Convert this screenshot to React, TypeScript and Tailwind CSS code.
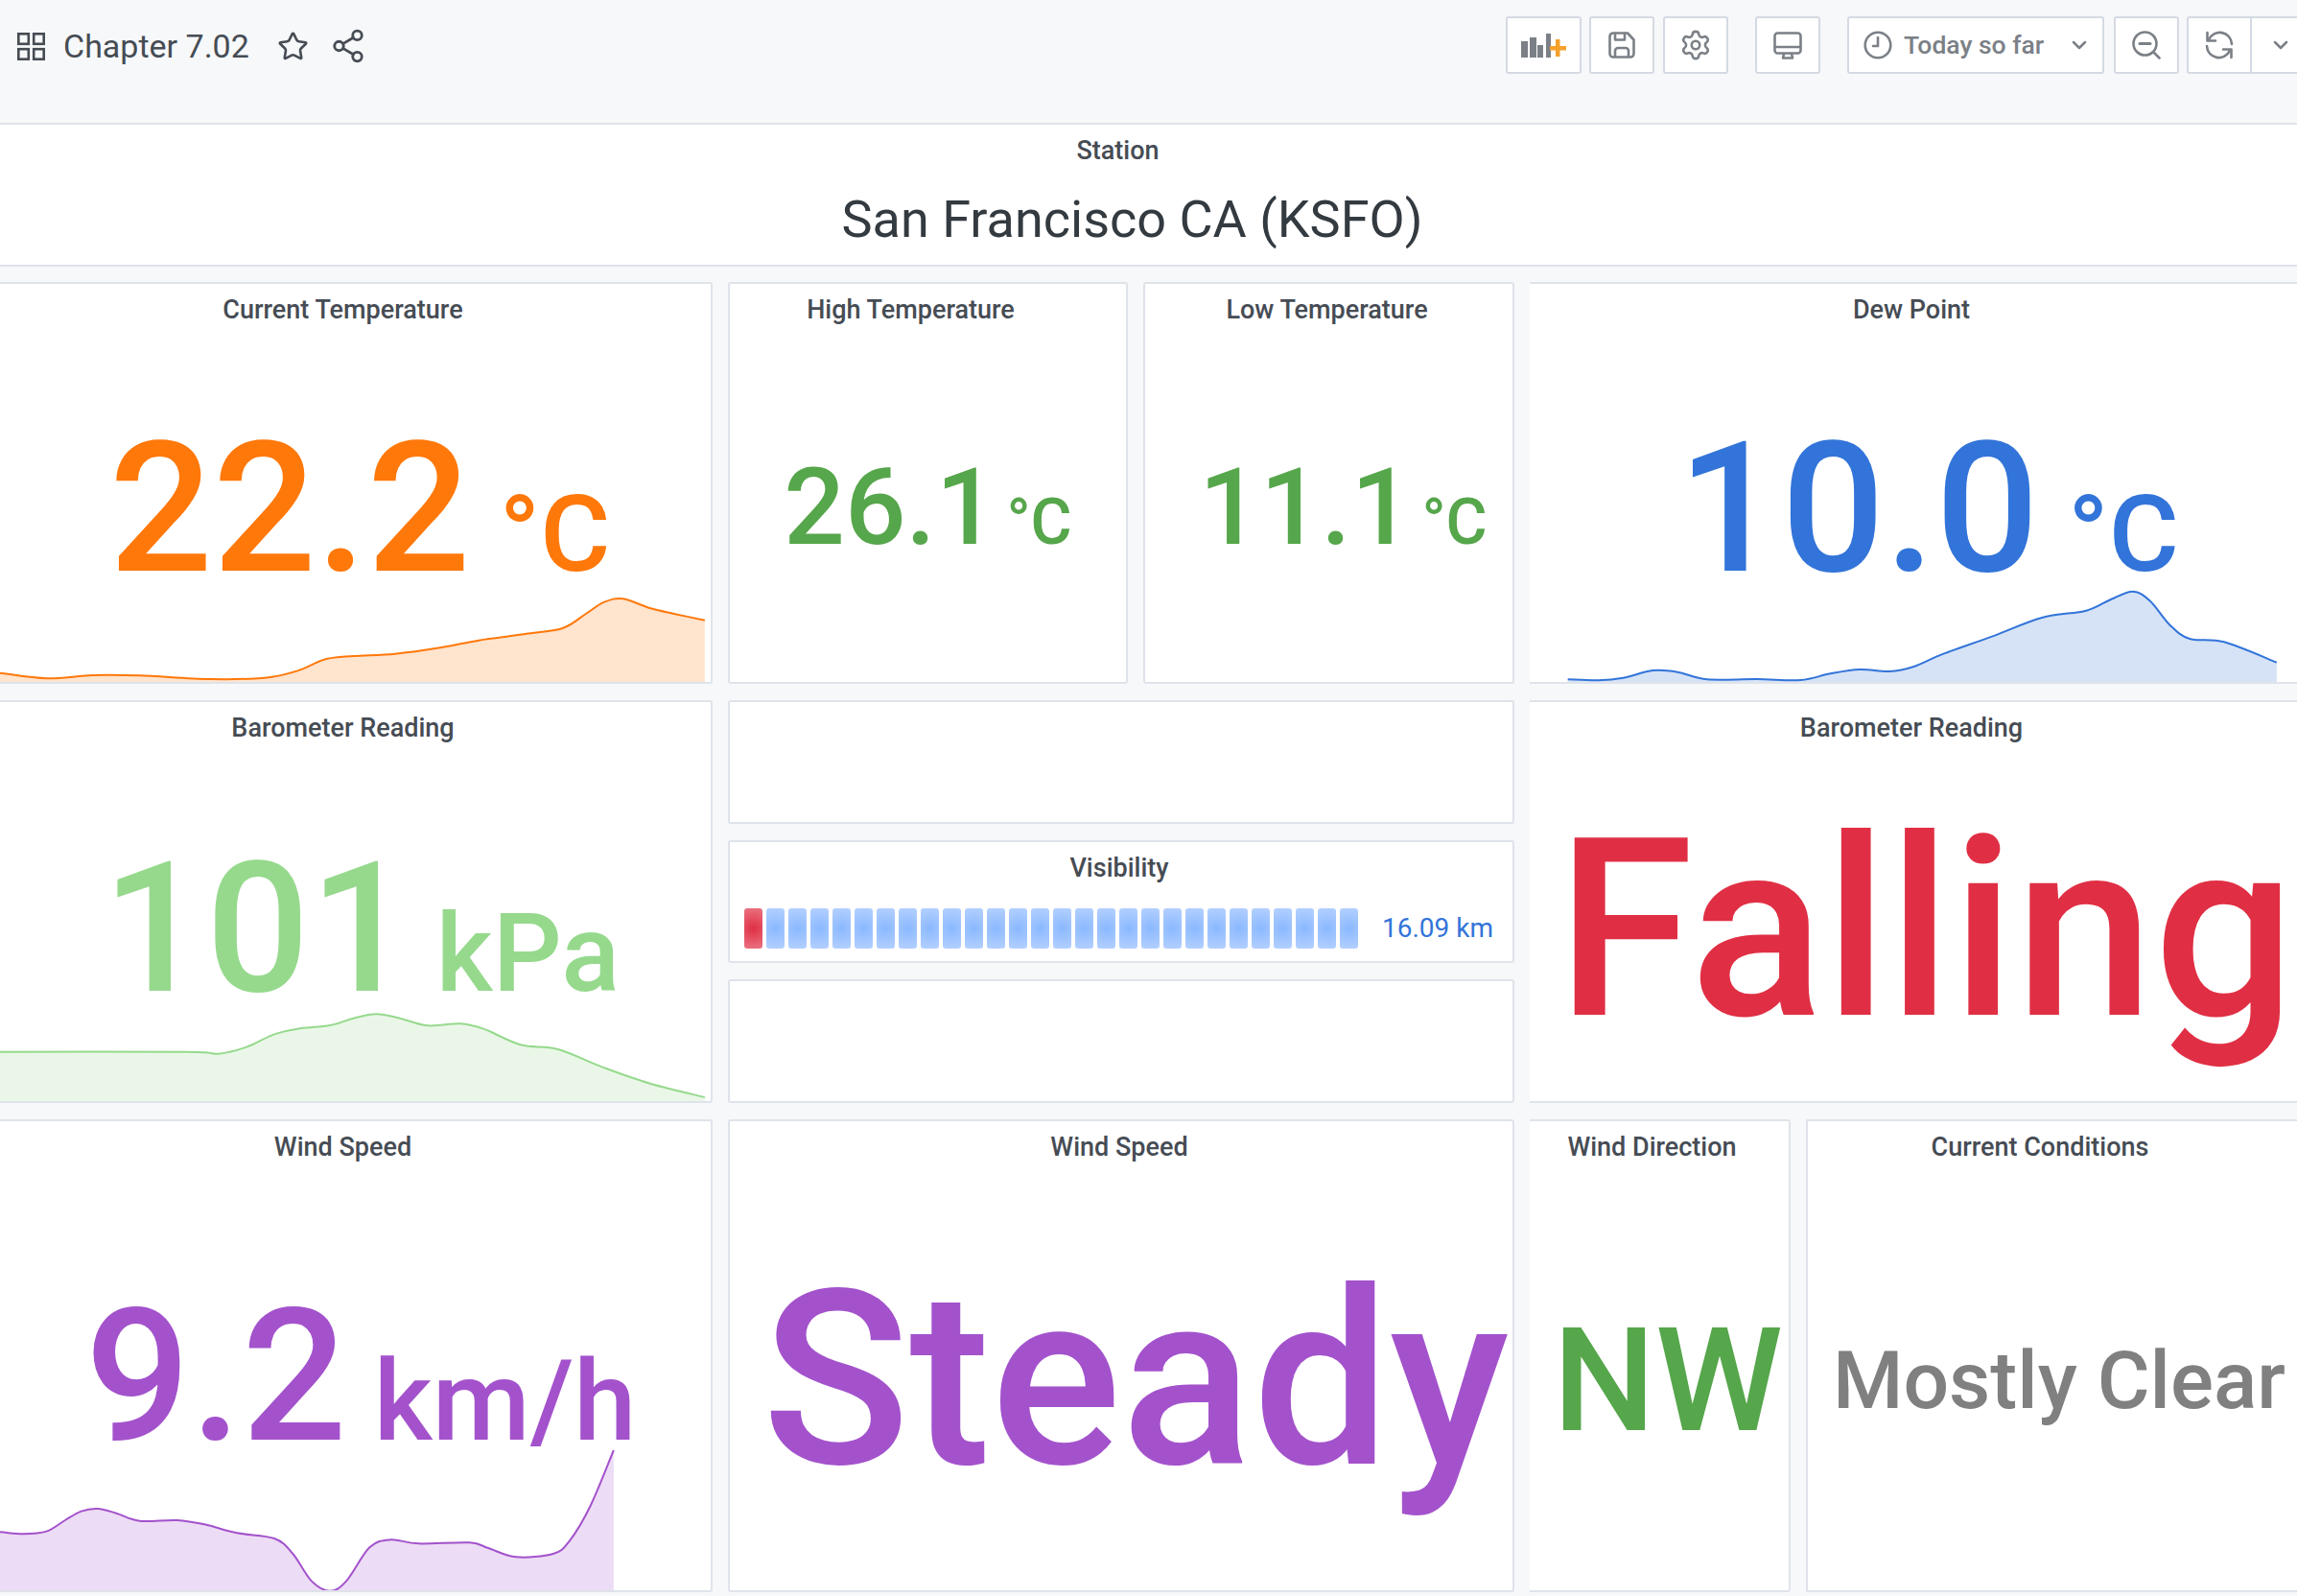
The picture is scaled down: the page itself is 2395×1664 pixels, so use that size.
import React from "react";
import { Star, Share2, Settings, ChevronDown } from "lucide-react";

type P = [number, number];
const smooth = (pts: P[]) => {
  let d = `M${pts[0][0]} ${pts[0][1]}`;
  for (let i = 0; i < pts.length - 1; i++) {
    const p0 = pts[Math.max(i - 1, 0)], p1 = pts[i], p2 = pts[i + 1], p3 = pts[Math.min(i + 2, pts.length - 1)];
    d += ` C${p1[0] + (p2[0] - p0[0]) / 6} ${p1[1] + (p2[1] - p0[1]) / 6} ${p2[0] - (p3[0] - p1[0]) / 6} ${p2[1] - (p3[1] - p1[1]) / 6} ${p2[0]} ${p2[1]}`;
  }
  return d;
};
const conv = (raw: number[][], sx: number, ox: number, oy: number): P[] => raw.map(([x, y]) => [x / sx + ox, y / 3 + oy]);

const orange = conv([[-40,358],[0,365],[100,382],[200,372],[300,373],[450,384],[570,380],[640,358],[700,322],[760,312],[850,305],[950,285],[1030,263],[1130,243],[1210,225],[1260,180],[1300,143],[1340,133],[1400,163],[1450,180],[1516,200]], 2.063, 0, 580);
const lgreen = conv([[-40,200],[0,200],[400,200],[470,206],[530,185],[590,145],[640,128],[710,117],[760,95],[810,82],[860,95],[920,118],[990,112],[1040,128],[1120,178],[1200,192],[1300,250],[1400,300],[1516,342]], 2.063, 0, 1030);
const blue = conv([[87,355],[150,358],[200,350],[260,327],[310,332],[370,355],[470,354],[560,357],[620,337],[680,324],[740,330],[790,315],[850,275],[950,220],[1050,162],[1140,140],[1190,105],[1235,80],[1270,110],[1310,185],[1350,228],[1420,238],[1527,302]], 1.948, 1590, 590);
const purple = conv([[-40,350],[0,352],[50,358],[100,350],[140,315],[175,287],[210,279],[250,293],[300,317],[380,315],[440,328],[510,355],[590,372],[630,420],[670,505],[710,536],[745,505],[795,400],[840,376],[900,388],[1010,385],[1050,402],[1110,430],[1190,420],[1225,380],[1270,270],[1320,96]], 2.063, 0, 1480);

function Spark({ pts, bottom, color, box }: { pts: P[]; bottom: number; color: string; box: [number, number, number, number] }) {
  const line = smooth(pts);
  const area = `${line} L${pts[pts.length - 1][0]} ${bottom} L${pts[0][0]} ${bottom} Z`;
  return (
    <svg className="absolute left-0 top-0 w-full h-full" viewBox={box.join(" ")} preserveAspectRatio="none">
      <path d={area} fill={color} fillOpacity={0.2} />
      <path d={line} fill="none" stroke={color} strokeWidth={2} />
    </svg>
  );
}

function Panel({ title, titleClass = "", className = "", children }: { title?: string; titleClass?: string; className?: string; children?: React.ReactNode }) {
  return (
    <div className={`relative overflow-hidden bg-white border-2 border-[#dfe3ea] rounded-[3px] ${className}`}>
      {title && <div className={`absolute left-0 top-[12px] text-center text-[27px] leading-[30px] font-medium text-[#464c54] z-10 ${titleClass}`}>{title}</div>}
      {children}
    </div>
  );
}

const Btn = ({ className = "", children }: { className?: string; children: React.ReactNode }) => (
  <div className={`h-[60px] flex items-center justify-center bg-white border-2 border-[#d4dae3] rounded-[3px] text-[#7b8087] ${className}`}>{children}</div>
);

const icon = { fill: "none", stroke: "currentColor", strokeWidth: 2.6, strokeLinecap: "round" as const, strokeLinejoin: "round" as const };

export default function App() {
  return (
    <div className="w-[2395px] h-[1664px] overflow-hidden bg-[#f7f8fa] font-['Roboto',sans-serif]">
      <header className="h-[130px] border-b-2 border-[#dfe3ea] flex items-start">
        <div className="flex items-center h-[96px] pl-[18px] text-[#464c54]">
          <svg width="29" height="29" viewBox="0 0 29 29" fill="none" stroke="currentColor" strokeWidth="2.6">
            <rect x="1.3" y="1.3" width="10.5" height="10.5" /><rect x="17.2" y="1.3" width="10.5" height="10.5" />
            <rect x="1.3" y="17.2" width="10.5" height="10.5" /><rect x="17.2" y="17.2" width="10.5" height="10.5" />
          </svg>
          <span className="ml-[19px] text-[34px] leading-none">Chapter 7.02</span>
          <Star className="ml-[29px]" size={33} strokeWidth={1.9} />
          <Share2 className="ml-[22px]" size={38} strokeWidth={1.8} />
        </div>
        <div className="ml-auto mt-[17px] flex items-center">
          <Btn className="w-[79px]">
            <svg width="47" height="25" viewBox="0 0 47 25">
              <rect x="0" y="8" width="7" height="17" fill="#7b8087" /><rect x="9" y="4" width="7" height="21" fill="#7b8087" />
              <rect x="17" y="12" width="6" height="13" fill="#7b8087" /><rect x="26" y="0" width="5" height="25" fill="#7b8087" />
              <path d="M36 6h4.5v7H47v4.5h-6.5V24H36v-6.5h-6V13h6z" fill="#f6a02c" />
            </svg>
          </Btn>
          <Btn className="w-[68px] ml-[8px]">
            <svg width="28" height="28" viewBox="0 0 28 28" {...icon}>
              <path d="M5 1.5h15l6.5 7V23a3.5 3.5 0 0 1-3.5 3.5H5A3.5 3.5 0 0 1 1.5 23V5A3.5 3.5 0 0 1 5 1.5z" />
              <path d="M7 2v6.5h10V2" /><path d="M7 26v-6a3 3 0 0 1 3-3h8a3 3 0 0 1 3 3v6" />
            </svg>
          </Btn>
          <Btn className="w-[68px] ml-[9px]"><Settings size={34} strokeWidth={1.8} /></Btn>
          <Btn className="w-[68px] ml-[28px]">
            <svg width="30" height="29" viewBox="0 0 30 29" {...icon}>
              <rect x="1.5" y="1.5" width="27" height="21" rx="3" /><path d="M2 16h26" /><path d="M11 23l-1 4.5h10l-1-4.5" />
            </svg>
          </Btn>
          <Btn className="w-[268px] ml-[28px] font-medium text-[26.5px] justify-start pl-[15px]">
            <svg width="30" height="30" viewBox="0 0 30 30" {...icon}>
              <circle cx="15" cy="15" r="13.3" /><path d="M15 7v9h-5" />
            </svg>
            <span className="ml-[12px]">Today so far</span>
            <ChevronDown className="ml-auto mr-[12px]" size={24} strokeWidth={2.5} />
          </Btn>
          <Btn className="w-[68px] ml-[10px]">
            <svg width="30" height="30" viewBox="0 0 30 30" {...icon}>
              <circle cx="13.5" cy="13.5" r="12" /><path d="M8 13.5h11" strokeWidth="3" /><path d="M23 23l5.5 5.5" />
            </svg>
          </Btn>
          <Btn className="w-[68px] ml-[8px] rounded-r-none">
            <svg width="30" height="30" viewBox="0 0 30 30" {...icon}>
              <path d="M4 9.5A12.5 12.5 0 0 1 28 14" /><path d="M2.5 2v8.5H11" />
              <path d="M26 20.5A12.5 12.5 0 0 1 2 16" /><path d="M27.5 28v-8.5H19" />
            </svg>
          </Btn>
          <Btn className="w-[49px] -ml-[2px] rounded-none border-r-0 justify-start pl-[18px]"><ChevronDown size={24} strokeWidth={2.5} /></Btn>
        </div>
      </header>

      <section className="h-[148px] bg-white border-b-2 border-[#dfe3ea] flex flex-col items-center">
        <div className="mt-[12px] pr-[64px] text-[27px] leading-[30px] font-medium text-[#464c54]">Station</div>
        <div className="mt-[26px] pr-[34px] text-[54px] leading-[62px] text-[#333a40]">San Francisco CA (KSFO)</div>
      </section>

      <main className="ml-[-28px] mt-[16px] grid grid-cols-[771px_417px_387px_272px_540px] grid-rows-[419px_420px_493px] gap-x-[16px] gap-y-[17px]">
        <Panel title="Current Temperature" titleClass="w-full">
          <Spark pts={orange} bottom={714} color="#ff780a" box={[-26, 296, 767, 415]} />
          <div className="absolute inset-0 flex items-baseline justify-center pt-[124px] pl-[35px] text-[#ff780a] font-medium z-10">
            <span className="text-[190px] leading-[220px]">22.2</span>
            <span className="text-[112px] ml-[30px]">°C</span>
          </div>
        </Panel>
        <Panel title="High Temperature" titleClass="w-full pr-[36px]">
          <div className="absolute inset-0 flex items-baseline justify-center pt-[173px] text-[#56a64b] font-medium">
            <span className="text-[112px] leading-[120px]">26.1</span>
            <span className="text-[66px] ml-[10px]">°C</span>
          </div>
        </Panel>
        <Panel title="Low Temperature" titleClass="w-full pr-[4px]">
          <div className="absolute inset-0 flex items-baseline justify-center pt-[173px] pl-[30px] text-[#56a64b] font-medium">
            <span className="text-[112px] leading-[120px]">11.1</span>
            <span className="text-[66px] ml-[10px]">°C</span>
          </div>
        </Panel>
        <Panel title="Dew Point" titleClass="w-[796px]" className="col-span-2 border-l-0 border-r-0 rounded-none">
          <Spark pts={blue} bottom={714} color="#3274d9" box={[1595, 296, 828, 415]} />
          <div className="absolute left-0 w-[796px] top-0 bottom-0 flex items-baseline justify-center pt-[124px] pl-[35px] text-[#3274d9] font-medium z-10">
            <span className="text-[190px] leading-[220px]">10.0</span>
            <span className="text-[112px] ml-[30px]">°C</span>
          </div>
        </Panel>

        <Panel title="Barometer Reading" titleClass="w-full">
          <Spark pts={lgreen} bottom={1150} color="#96d98d" box={[-26, 732, 767, 416]} />
          <div className="absolute inset-0 flex items-baseline justify-center pt-[126px] pl-[38px] text-[#96d98d] font-medium z-10">
            <span className="text-[190px] leading-[220px]">101</span>
            <span className="text-[113px] ml-[24px]">kPa</span>
          </div>
        </Panel>
        <div className="col-span-2 flex flex-col gap-[17px]">
          <Panel className="h-[129px]" />
          <Panel title="Visibility" titleClass="w-full pr-[4px]" className="h-[129px]">
            <div className="absolute left-[15px] right-[20px] top-[68px] h-[44px] flex items-center justify-between">
              <div className="flex gap-[4px]">
                {Array.from({ length: 28 }).map((_, i) => (
                  <div key={i} className={`w-[19px] h-[42px] rounded-[3px] ${i === 0 ? "bg-[radial-gradient(circle,#e02f44,#ea7583)]" : "bg-[radial-gradient(circle,#8ab8ff,#b5d1ff)]"}`} />
                ))}
              </div>
              <span className="text-[28px] text-[#3274d9]">16.09 km</span>
            </div>
          </Panel>
          <Panel className="h-[129px]" />
        </div>
        <Panel title="Barometer Reading" titleClass="w-[796px]" className="col-span-2 border-l-0 border-r-0 rounded-none">
          <div className="absolute inset-0 text-left text-[#e02f44] font-medium whitespace-nowrap pt-[97px] pl-[28px] text-[260px] leading-[280px]">Falling</div>
        </Panel>

        <Panel title="Wind Speed" titleClass="w-full">
          <Spark pts={purple} bottom={1660} color="#a352cc" box={[-26, 1169, 767, 489]} />
          <div className="absolute inset-0 flex items-baseline justify-center pt-[156px] pl-[37px] text-[#a352cc] font-medium z-10">
            <span className="text-[193px] leading-[220px]">9.2</span>
            <span className="text-[117px] ml-[28px]">km/h</span>
          </div>
        </Panel>
        <Panel title="Wind Speed" titleClass="w-full pr-[4px]" className="col-span-2">
          <div className="absolute inset-0 text-center text-[#a352cc] font-medium whitespace-nowrap pt-[130px] pl-[30px] text-[254px] leading-[280px]">Steady</div>
        </Panel>
        <Panel title="Wind Direction" titleClass="w-full pr-[15px]" className="border-l-0 rounded-l-none">
          <div className="absolute inset-0 flex items-center justify-center pl-[18px] pt-[53px] text-[#56a64b] font-medium text-[151px]">NW</div>
        </Panel>
        <Panel title="Current Conditions" titleClass="w-full pr-[54px]" className="border-r-0 rounded-none">
          <div className="absolute inset-0 flex items-center justify-start pl-[26px] pt-[53px] text-[#808080] font-medium text-[84px] whitespace-nowrap">Mostly Clear</div>
        </Panel>
      </main>
    </div>
  );
}
